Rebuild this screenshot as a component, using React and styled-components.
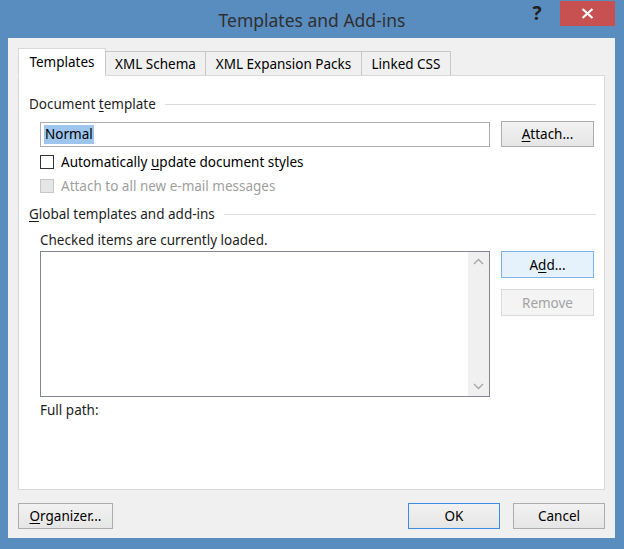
import React from 'react';
import styled, { createGlobalStyle } from 'styled-components';

const GlobalStyle = createGlobalStyle`
  html, body {
    margin: 0;
    padding: 0;
    background: #598cbf;
  }
  body {
    font-family: "Noto Sans", "Open Sans", sans-serif;
    font-size: 13.5px;
    color: #000;
  }
`;

const S = {
  Window: styled.div`
    width: 624px;
    height: 549px;
    background: #598cbf;
    display: flex;
    flex-direction: column;
    box-sizing: border-box;
    overflow: hidden;
  `,
  TitleBar: styled.div`
    height: 38px;
    display: flex;
    align-items: flex-start;
  `,
  Title: styled.div`
    flex: 1;
    text-align: center;
    font-size: 17.5px;
    line-height: 40px;
    color: #303030;
    padding-left: 99px;
  `,
  Help: styled.div`
    width: 24px;
    margin-top: 3px;
    font-size: 19px;
    font-weight: 700;
    color: #222;
    line-height: 20px;
    text-align: center;
    margin-right: 11px;
  `,
  Close: styled.div`
    width: 55px;
    height: 25px;
    margin-top: 1px;
    margin-right: 9px;
    background: #c75050;
    display: flex;
    align-items: center;
    justify-content: center;
  `,
  Client: styled.div`
    margin: 0 9px 0 8px;
    height: 500px;
    background: #f0f0f0;
    padding: 9px 10px 0 10px;
    box-sizing: border-box;
    display: flex;
    flex-direction: column;
  `,
  Tabs: styled.div`
    display: flex;
    align-items: flex-end;
    height: 28px;
    position: relative;
    z-index: 1;
  `,
  Tab: styled.div`
    height: ${p => (p.$active ? '28px' : '24px')};
    box-sizing: border-box;
    background: ${p => (p.$active ? '#fff' : '#f0f0f0')};
    border: 1px solid ${p => (p.$active ? '#d9d9d9' : '#c8c8c8')};
    border-bottom: ${p => (p.$active ? '1px solid #fff' : 'none')};
    margin-left: ${p => (p.$first ? '0' : '-1px')};
    margin-bottom: ${p => (p.$active ? '-1px' : '0')};
    padding-top: ${p => (p.$active ? '0' : '1px')};
    width: ${p => p.$w}px;
    display: flex;
    align-items: center;
    justify-content: center;
    white-space: nowrap;
  `,
  Panel: styled.div`
    height: 415px;
    background: #fff;
    border: 1px solid #d9d9d9;
    box-sizing: border-box;
    padding: 19px 8px 0 10px;
    display: flex;
    flex-direction: column;
  `,
  Group: styled.div`
    display: flex;
    align-items: center;
    height: 18px;
    margin-top: ${p => p.$mt || 0}px;
    color: #1e1e1e;
    &::after {
      content: '';
      flex: 1;
      height: 1px;
      background: #dcdcdc;
      margin-left: 9px;
    }
  `,
  Body: styled.div`
    padding-left: 11px;
    display: flex;
    flex-direction: column;
  `,
  Row: styled.div`
    display: flex;
    align-items: ${p => p.$align || 'center'};
    gap: 11px;
    margin-top: ${p => p.$mt || 0}px;
  `,
  Input: styled.div`
    width: 450px;
    height: 25px;
    box-sizing: border-box;
    border: 1px solid #abadb3;
    display: flex;
    align-items: center;
    padding-left: 3px;
  `,
  Selected: styled.span`
    background: #9dc5ee;
    line-height: 19px;
    padding: 0 1px;
  `,
  Button: styled.div`
    width: ${p => p.$w || 93}px;
    height: ${p => p.$h || 26}px;
    box-sizing: border-box;
    border: 1px solid ${p => p.$border || '#adadad'};
    background: ${p => p.$bg || 'linear-gradient(#f2f2f2, #e6e6e6)'};
    color: ${p => (p.$disabled ? '#a3a3a3' : '#000')};
    display: flex;
    align-items: center;
    justify-content: center;
  `,
  Check: styled.label`
    display: flex;
    align-items: center;
    height: 18px;
    gap: 7px;
    margin-top: ${p => p.$mt || 0}px;
    color: ${p => (p.$disabled ? '#a0a0a0' : '#000')};
  `,
  Box: styled.span`
    width: 14px;
    height: 14px;
    box-sizing: border-box;
    border: 1px solid ${p => (p.$disabled ? '#c6c6c6' : '#333')};
    background: ${p => (p.$disabled ? '#e6e6e6' : '#fff')};
  `,
  Label: styled.div`
    height: 18px;
    line-height: 18px;
    margin-top: ${p => p.$mt || 0}px;
    color: #1e1e1e;
  `,
  List: styled.div`
    width: 450px;
    height: 146px;
    box-sizing: border-box;
    border: 1px solid #828790;
    display: flex;
    justify-content: flex-end;
  `,
  Scroll: styled.div`
    width: 21px;
    background: #f0f0f0;
    display: flex;
    flex-direction: column;
    justify-content: space-between;
    align-items: center;
    padding: 6px 0;
  `,
  Side: styled.div`
    display: flex;
    flex-direction: column;
    gap: 11px;
  `,
  Footer: styled.div`
    display: flex;
    align-items: center;
    margin-top: 13px;
    gap: 13px;
  `,
  Spacer: styled.div`
    flex: 1;
  `,
};

const Key = styled.span`
  text-decoration: underline;
  text-underline-offset: 2px;
`;

const Chevron = ({ up }) => (
  <svg width="11" height="7" viewBox="0 0 11 7">
    <path
      d={up ? 'M1 6 L5.5 1.5 L10 6' : 'M1 1 L5.5 5.5 L10 1'}
      fill="none"
      stroke="#a6a6a6"
      strokeWidth="1.3"
    />
  </svg>
);

const App = () => {
  return (
    <S.Window>
      <GlobalStyle />
      <S.TitleBar>
        <S.Title>Templates and Add-ins</S.Title>
        <S.Help>?</S.Help>
        <S.Close>
          <svg width="13" height="11" viewBox="0 0 13 11">
            <path d="M1.5 1 L11.5 10 M11.5 1 L1.5 10" stroke="#fff" strokeWidth="2.2" />
          </svg>
        </S.Close>
      </S.TitleBar>
      <S.Client>
        <S.Tabs>
          <S.Tab $active $first $w={88}>Templates</S.Tab>
          <S.Tab $w={101}>XML Schema</S.Tab>
          <S.Tab $w={157}>XML Expansion Packs</S.Tab>
          <S.Tab $w={90}>Linked CSS</S.Tab>
        </S.Tabs>
        <S.Panel>
          <S.Group>
            Document&nbsp;<Key>t</Key>emplate
          </S.Group>
          <S.Body>
            <S.Row $mt={8}>
              <S.Input>
                <S.Selected>Normal</S.Selected>
              </S.Input>
              <S.Button>
                <Key>A</Key>ttach...
              </S.Button>
            </S.Row>
            <S.Check $mt={6}>
              <S.Box />
              <span>
                Automatically <Key>u</Key>pdate document styles
              </span>
            </S.Check>
            <S.Check $mt={6} $disabled>
              <S.Box $disabled />
              <span>Attach to all new e-mail messages</span>
            </S.Check>
          </S.Body>
          <S.Group $mt={10}>
            <Key>G</Key>lobal templates and add-ins
          </S.Group>
          <S.Body>
            <S.Label $mt={8}>Checked items are currently loaded.</S.Label>
            <S.Row $mt={2} $align="flex-start">
              <S.List>
                <S.Scroll>
                  <Chevron up />
                  <Chevron />
                </S.Scroll>
              </S.List>
              <S.Side>
                <S.Button $h={27} $bg="#e5f1fb" $border="#7eb4ea">
                  A<Key>d</Key>d...
                </S.Button>
                <S.Button $h={27} $bg="#f4f4f4" $border="#dadada" $disabled>
                  Remove
                </S.Button>
              </S.Side>
            </S.Row>
            <S.Label $mt={4}>Full path:</S.Label>
          </S.Body>
        </S.Panel>
        <S.Footer>
          <S.Button $w={95}>
            <Key>O</Key>rganizer...
          </S.Button>
          <S.Spacer />
          <S.Button $w={92} $border="#3c8ce6">OK</S.Button>
          <S.Button $w={92}>Cancel</S.Button>
        </S.Footer>
      </S.Client>
    </S.Window>
  );
};

export default App;
